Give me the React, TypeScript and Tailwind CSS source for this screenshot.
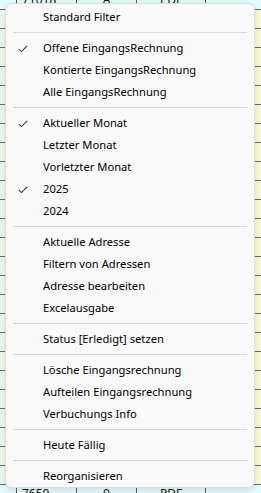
import React from "react";

type Entry = { label: string; checked?: boolean } | "sep";

const entries: Entry[] = [
  { label: "Standard Filter" },
  "sep",
  { label: "Offene EingangsRechnung", checked: true },
  { label: "Kontierte EingangsRechnung" },
  { label: "Alle EingangsRechnung" },
  "sep",
  { label: "Aktueller Monat", checked: true },
  { label: "Letzter Monat" },
  { label: "Vorletzter Monat" },
  { label: "2025", checked: true },
  { label: "2024" },
  "sep",
  { label: "Aktuelle Adresse" },
  { label: "Filtern von Adressen" },
  { label: "Adresse bearbeiten" },
  { label: "Excelausgabe" },
  "sep",
  { label: "Status [Erledigt] setzen" },
  "sep",
  { label: "Lösche Eingangsrechnung" },
  { label: "Aufteilen Eingangsrechnung" },
  { label: "Verbuchungs Info" },
  "sep",
  { label: "Heute Fällig" },
  "sep",
  { label: "Reorganisieren" },
];

function Check() {
  return (
    <svg width="10" height="8" viewBox="0 0 10 8" className="absolute left-[12px] top-[8px]">
      <path d="M0.8 4.2 L3.4 6.6 L9.2 0.8" fill="none" stroke="#3a3a3a" strokeWidth="1.1" />
    </svg>
  );
}

function Row({ bg, texts }: { bg: string; texts: string[] }) {
  return (
    <div className={`relative flex h-[19px] shrink-0 border-t border-[#6e6e6e] ${bg}`}>
      <div className="w-[3px] bg-[#e2fbfb]" />
      <div className="w-[14px] border-r border-[#5a5a5a]" />
      <div className="flex w-[60px] items-center border-r border-[#5a5a5a] pl-[5px] text-[12px] text-[#111]">{texts[0]}</div>
      <div className="flex w-[60px] items-center justify-center border-r border-[#5a5a5a] text-[12px] text-[#111]">{texts[1]}</div>
      <div className="flex w-[69px] items-center justify-center border-r border-[#5a5a5a] text-[12px] text-[#111]">{texts[2]}</div>
      <div className="flex-1" />
    </div>
  );
}

export default function App() {
  return (
    <div
      className="relative h-[493px] w-[261px] overflow-hidden bg-[#e2fbfb]"
      style={{ fontFamily: '"Noto Sans", "Open Sans", sans-serif' }}
    >
      <div className="flex flex-col">
        <div className="mt-[-10px]">
          <Row bg="bg-[#e2fbfb]" texts={["71018", "A", "PDF"]} />
        </div>
        {Array.from({ length: 25 }).map((_, i) => (
          <Row key={i} bg="bg-[#fbf8d9]" texts={["", "", ""]} />
        ))}
        <Row bg="bg-[#e2fbfb]" texts={["7650", "0", "PDF"]} />
      </div>

      <div className="absolute left-[5px] top-[3px] w-[250px] rounded-[7px] border border-[#dedede] bg-[#f9f9f9] pt-[2px] shadow-[0_2px_6px_rgba(0,0,0,0.12)]">
        {entries.map((e, i) =>
          e === "sep" ? (
            <div key={i} className="flex h-[9px] items-center px-[7px]">
              <div className="h-px w-full bg-[#d7d7d7]" />
            </div>
          ) : (
            <div
              key={i}
              className="relative flex h-[22px] items-center pl-[37px] text-[11.2px] text-[#000]"
            >
              {e.checked ? <Check /> : null}
              <span>{e.label}</span>
            </div>
          )
        )}
      </div>
    </div>
  );
}
